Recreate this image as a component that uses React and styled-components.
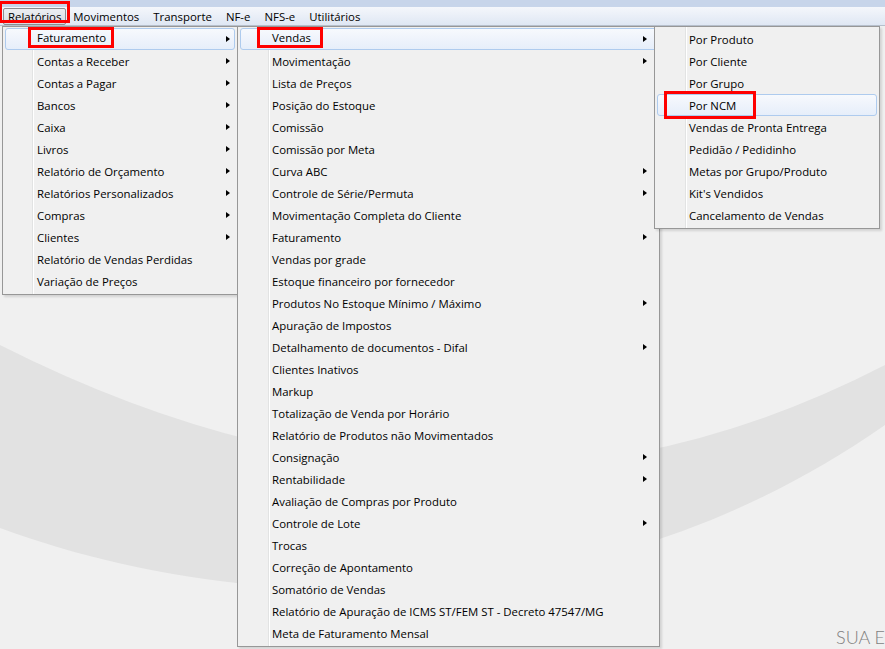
import styled, { createGlobalStyle } from "styled-components";

const GlobalStyle = createGlobalStyle`
  html, body {
    margin: 0;
    padding: 0;
    background: #f0f0f0;
  }
  * {
    box-sizing: border-box;
  }
`;

const Screen = styled.div`
  position: relative;
  width: 885px;
  height: 649px;
  overflow: hidden;
  display: flex;
  flex-direction: column;
  background: #f0f0f0;
  font-family: "Open Sans", "Noto Sans", sans-serif;
  font-size: 11.4px;
  color: #000;
`;

const TitleStrip = styled.div`
  height: 7px;
  background: #c7d5ea;
`;

const MenuBar = styled.div`
  height: 19px;
  display: flex;
  align-items: stretch;
  padding-left: 3px;
  background: linear-gradient(#f4f7fb 0%, #eef2f9 30%, #dfe7f3 100%);
  border-bottom: 1px solid #b6bfcc;
`;

const BarItem = styled.div`
  position: relative;
  display: flex;
  align-items: center;
  padding: 0 ${(p) => (p.$pressed ? 4 : 6)}px;
  margin-top: 1px;
  border: 1px solid ${(p) => (p.$pressed ? "#8b8d91" : "transparent")};
  border-radius: 2px;
  background: ${(p) =>
    p.$pressed ? "linear-gradient(#eceef2, #d7dce4)" : "transparent"};
`;

/* red annotation drawn over the pressed menubar item */
const BarMark = styled.span`
  position: absolute;
  left: -5px;
  right: -5px;
  top: -8px;
  bottom: 1px;
  border: 3px solid #ff0000;
`;

const Desktop = styled.div`
  position: relative;
  flex: 1;
  display: flex;
  align-items: flex-end;
  padding: 0 0 1px 836px;
`;

const Swoosh = styled.svg`
  position: absolute;
  left: 0;
  top: -26px;
  width: 885px;
  height: 649px;
`;

const Brand = styled.span`
  position: relative;
  font-family: Lato, "Open Sans", sans-serif;
  font-weight: 300;
  font-size: 18px;
  color: #7f7f7f;
  white-space: nowrap;
`;

const Popup = styled.div`
  position: absolute;
  left: ${(p) => p.$left}px;
  top: 26px;
  width: ${(p) => p.$width}px;
  padding: 1px 0 2px;
  border: 1px solid #979797;
  box-shadow: 2px 2px 2px rgba(0, 0, 0, 0.12);
  background: linear-gradient(
    to right,
    #f0f0f0 ${(p) => p.$gutter}px,
    #e2e3e3 ${(p) => p.$gutter}px,
    #e2e3e3 ${(p) => p.$gutter + 1}px,
    #ffffff ${(p) => p.$gutter + 1}px,
    #ffffff ${(p) => p.$gutter + 2}px,
    #f0f0f0 ${(p) => p.$gutter + 2}px
  );
`;

const Item = styled.div`
  height: 22px;
  margin: 0 2px;
  display: flex;
  align-items: center;
  padding: 0 ${(p) => p.$arrowPad}px 0 31px;
  border: 1px solid ${(p) => (p.$active ? "#aecbee" : "transparent")};
  border-radius: 3px;
  background: ${(p) =>
    p.$active ? "linear-gradient(#f7f9fd, #e6eefa)" : "transparent"};
  white-space: nowrap;
`;

const Label = styled.span`
  flex: 1;
`;

/* red annotation box around a label, sized by its padding */
const Marked = styled.span`
  display: inline-flex;
  align-items: center;
  height: ${(p) => p.$m.h}px;
  margin-left: -${(p) => p.$m.l}px;
  margin-top: ${(p) => p.$m.dy}px;
  padding: 0 ${(p) => p.$m.r}px 0 ${(p) => p.$m.l - 3}px;
  border: 3px solid #ff0000;
`;

const Arrow = styled.span`
  width: 0;
  height: 0;
  border-left: 4px solid #000;
  border-top: 3.5px solid transparent;
  border-bottom: 3.5px solid transparent;
`;

const barItems = [
  "Relatórios",
  "Movimentos",
  "Transporte",
  "NF-e",
  "NFS-e",
  "Utilitários",
];

const relatorios = [
  ["Faturamento", true],
  ["Contas a Receber", true],
  ["Contas a Pagar", true],
  ["Bancos", true],
  ["Caixa", true],
  ["Livros", true],
  ["Relatório de Orçamento", true],
  ["Relatórios Personalizados", true],
  ["Compras", true],
  ["Clientes", true],
  ["Relatório de Vendas Perdidas", false],
  ["Variação de Preços", false],
];

const faturamento = [
  ["Vendas", true],
  ["Movimentação", true],
  ["Lista de Preços", false],
  ["Posição do Estoque", false],
  ["Comissão", false],
  ["Comissão por Meta", false],
  ["Curva ABC", true],
  ["Controle de Série/Permuta", true],
  ["Movimentação Completa do Cliente", false],
  ["Faturamento", true],
  ["Vendas por grade", false],
  ["Estoque financeiro por fornecedor", false],
  ["Produtos No Estoque Mínimo / Máximo", true],
  ["Apuração de Impostos", false],
  ["Detalhamento de documentos - Difal", true],
  ["Clientes Inativos", false],
  ["Markup", false],
  ["Totalização de Venda por Horário", false],
  ["Relatório de Produtos não Movimentados", false],
  ["Consignação", true],
  ["Rentabilidade", true],
  ["Avaliação de Compras por Produto", false],
  ["Controle de Lote", true],
  ["Trocas", false],
  ["Correção de Apontamento", false],
  ["Somatório de Vendas", false],
  ["Relatório de Apuração de ICMS ST/FEM ST - Decreto 47547/MG", false],
  ["Meta de Faturamento Mensal", false],
];

const vendas = [
  ["Por Produto", false],
  ["Por Cliente", false],
  ["Por Grupo", false],
  ["Por NCM", false],
  ["Vendas de Pronta Entrega", false],
  ["Pedidão / Pedidinho", false],
  ["Metas por Grupo/Produto", false],
  ["Kit's Vendidos", false],
  ["Cancelamento de Vendas", false],
];

function Menu({ items, left, width, gutter, activeIndex, arrowPad, mark }) {
  return (
    <Popup $left={left} $width={width} $gutter={gutter}>
      {items.map(([label, sub], i) => (
        <Item key={label + i} $active={i === activeIndex} $arrowPad={arrowPad}>
          <Label>
            {i === activeIndex ? <Marked $m={mark}>{label}</Marked> : label}
          </Label>
          {sub && <Arrow />}
        </Item>
      ))}
    </Popup>
  );
}

export default function App() {
  return (
    <>
      <GlobalStyle />
      <Screen>
        <TitleStrip />
        <MenuBar>
          {barItems.map((name, i) => (
            <BarItem key={name} $pressed={i === 0}>
              {name}
              {i === 0 && <BarMark />}
            </BarItem>
          ))}
        </MenuBar>
        <Desktop>
          <Swoosh viewBox="0 0 885 649">
            <path
              d="M0 345 Q467 581 885 365 L885 425 C600 625 250 620 0 528 Z"
              fill="#e2e2e2"
            />
          </Swoosh>
          <Brand>SUA E</Brand>
        </Desktop>

        <Menu
          items={relatorios}
          left={2}
          width={236}
          gutter={29}
          activeIndex={0}
          arrowPad={4}
          mark={{ l: 9, r: 5, h: 21, dy: -3 }}
        />
        <Menu
          items={faturamento}
          left={237}
          width={423}
          gutter={30}
          activeIndex={0}
          arrowPad={9}
          mark={{ l: 15, r: 9, h: 21, dy: -3 }}
        />
        <Menu
          items={vendas}
          left={654}
          width={226}
          gutter={30}
          activeIndex={3}
          arrowPad={8}
          mark={{ l: 25, r: 17, h: 28, dy: 0 }}
        />
      </Screen>
    </>
  );
}
